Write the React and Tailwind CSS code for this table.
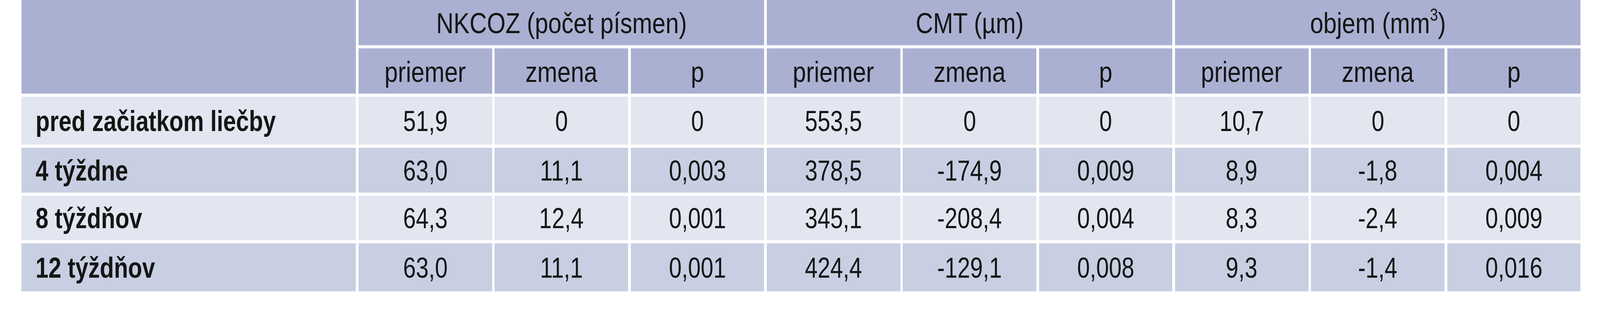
const groups = ['NKCOZ (počet písmen)', 'CMT (µm)', 'objem'];
const subCols = ['priemer', 'zmena', 'p'];

const rows = [
  { label: 'pred začiatkom liečby', values: ['51,9', '0', '0', '553,5', '0', '0', '10,7', '0', '0'], tone: 'light' },
  { label: '4 týždne', values: ['63,0', '11,1', '0,003', '378,5', '-174,9', '0,009', '8,9', '-1,8', '0,004'], tone: 'dark' },
  { label: '8 týždňov', values: ['64,3', '12,4', '0,001', '345,1', '-208,4', '0,004', '8,3', '-2,4', '0,009'], tone: 'light' },
  { label: '12 týždňov', values: ['63,0', '11,1', '0,001', '424,4', '-129,1', '0,008', '9,3', '-1,4', '0,016'], tone: 'dark' },
];

// the table is drawn for a 4865px wide page; narrower windows get a condensed text
const head = 'whitespace-nowrap scale-x-83 min-[4500px]:scale-x-100';
const label = 'origin-left whitespace-nowrap font-bold scale-x-80 min-[4500px]:scale-x-100';
const num = 'whitespace-nowrap scale-x-79 min-[4500px]:scale-x-100';

const App = () => {
  return (
    <div className="min-h-[800px] w-full bg-white pl-[1.336vw] font-['Liberation_Sans',Arial,sans-serif] text-[74px] leading-none text-[#151515]">
      <div className="grid w-[97.45vw] grid-cols-[1018fr_repeat(9,406fr)] grid-rows-[116px_116px_123px_115px_114px_123px] gap-x-[0.165vw] gap-y-2">
        <div className="row-span-2 bg-[#aab0d1]" />
        {groups.map((name, i) => (
          <div key={name} className="col-span-3 flex items-center justify-center bg-[#aab0d1] pt-[4px]">
            {i === 2 ? (
              <span className={head}>
                objem (mm<sup className="relative -top-[6px] align-super text-[44px]">3</sup>)
              </span>
            ) : (
              <span className={head}>{name}</span>
            )}
          </div>
        ))}
        {groups.map((g) =>
          subCols.map((c) => (
            <div key={g + c} className="flex items-center justify-center bg-[#aab0d1] pt-[6px]">
              <span className={head}>{c}</span>
            </div>
          ))
        )}
        {rows.map((row) => {
          const bg = row.tone === 'light' ? 'bg-[#e1e6f0]' : 'bg-[#c8cfe2]';
          return [
            <div key={row.label} className={`flex items-center pl-[0.884vw] pt-[2px] ${bg}`}>
              <span className={label}>{row.label}</span>
            </div>,
            ...row.values.map((v, i) => (
              <div key={row.label + i} className={`flex items-center justify-center pt-[2px] ${bg}`}>
                <span className={num}>{v}</span>
              </div>
            )),
          ];
        })}
      </div>
    </div>
  );
};

export default App;
